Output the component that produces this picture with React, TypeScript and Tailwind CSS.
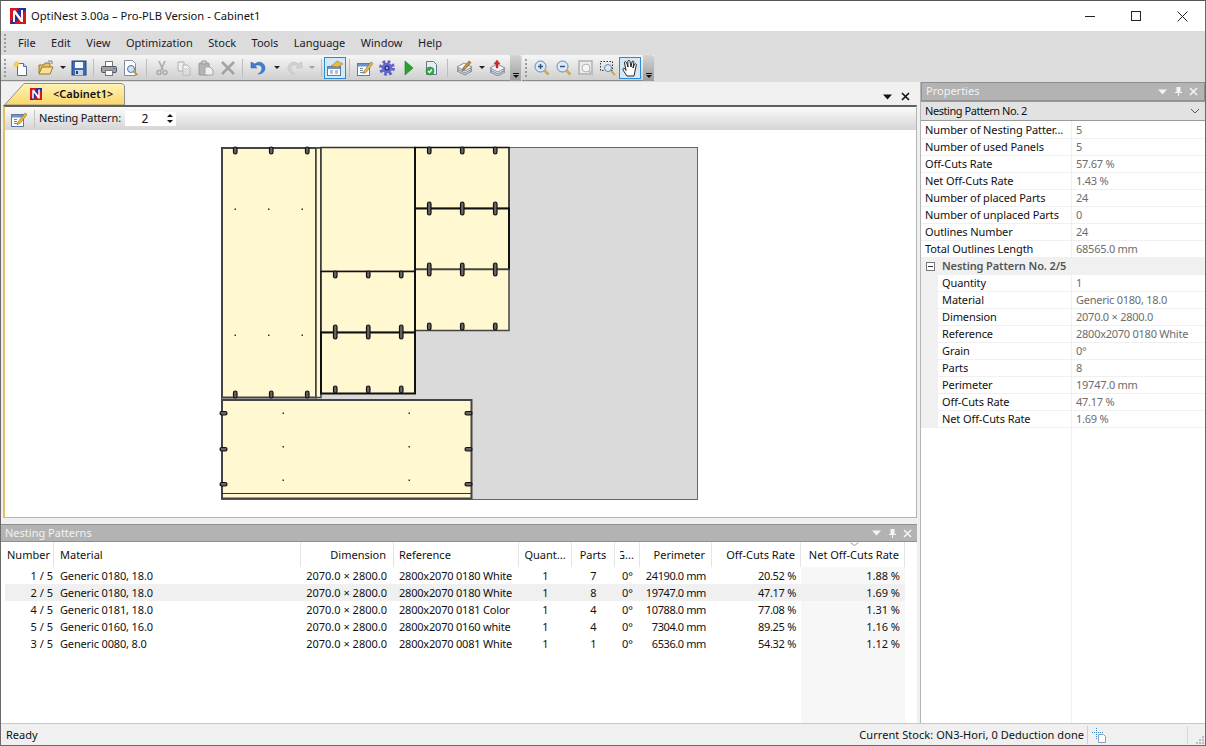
import type { ReactNode } from 'react';

// ─── Data ───

const SUMMARY = [
  ['Number of Nesting Patter...', '5'],
  ['Number of used Panels', '5'],
  ['Off-Cuts Rate', '57.67 %'],
  ['Net Off-Cuts Rate', '1.43 %'],
  ['Number of placed Parts', '24'],
  ['Number of unplaced Parts', '0'],
  ['Outlines Number', '24'],
  ['Total Outlines Length', '68565.0 mm'],
];

const DETAILS = [
  ['Quantity', '1'],
  ['Material', 'Generic 0180, 18.0'],
  ['Dimension', '2070.0 × 2800.0'],
  ['Reference', '2800x2070 0180 White'],
  ['Grain', '0°'],
  ['Parts', '8'],
  ['Perimeter', '19747.0 mm'],
  ['Off-Cuts Rate', '47.17 %'],
  ['Net Off-Cuts Rate', '1.69 %'],
];

const PATTERNS = [
  ['1 / 5', 'Generic 0180, 18.0', '2800x2070 0180 White', '7', '24190.0 mm', '20.52 %', '1.88 %'],
  ['2 / 5', 'Generic 0180, 18.0', '2800x2070 0180 White', '8', '19747.0 mm', '47.17 %', '1.69 %'],
  ['4 / 5', 'Generic 0181, 18.0', '2800x2070 0181 Color', '4', '10788.0 mm', '77.08 %', '1.31 %'],
  ['5 / 5', 'Generic 0160, 16.0', '2800x2070 0160 white', '4', '7304.0 mm', '89.25 %', '1.16 %'],
  ['3 / 5', 'Generic 0080, 8.0', '2800x2070 0081 White', '1', '6536.0 mm', '54.32 %', '1.12 %'],
];

const HEAD_GRID = 'grid grid-cols-[53px_247px_93px_125px_53px_43px_25px_72px_89px_104px]';
const ROW_GRID = 'ml-[4px] grid w-[900px] grid-cols-[49px_247px_93px_125px_53px_43px_25px_72px_89px_104px]';

// ─── Toolbar icons ───

function Svg({ children }: { children: ReactNode }) {
  return (
    <svg width="16" height="16" viewBox="0 0 16 16" className="shrink-0">
      {children}
    </svg>
  );
}

const NewIcon = () => (
  <Svg>
    <path d="M4.500 3.500h6l3 3v9h-9z" fill="#fff" stroke="#5a6f8c" />
    <path d="M10.500 3.500v3h3" fill="#dfe6ef" stroke="#5a6f8c" />
    <path d="M3 0l1 2 2-1-1 2 2 1-2 1 1 2-2-1-1 2-1-2-2 1 1-2-1-1 2-1-1-2 2 1z" fill="#f6cf4a" />
  </Svg>
);
const OpenIcon = () => (
  <Svg>
    <path d="M1 5h5l1-2h5v10H1z" fill="#e7c565" stroke="#99772b" />
    <path d="M1 14l3-7h11l-3 7z" fill="#f9e298" stroke="#99772b" />
    <path d="M10 1h4v3" fill="none" stroke="#6a7f9c" />
  </Svg>
);
const SaveIcon = () => (
  <Svg>
    <rect x="1" y="1" width="14" height="14" fill="#3f6db5" stroke="#23437c" />
    <rect x="4" y="2" width="8" height="6" fill="#f4f7fb" />
    <rect x="4" y="10" width="8" height="5" fill="#c9d4e4" />
    <rect x="5" y="11" width="2" height="3" fill="#23437c" />
  </Svg>
);
const PrintIcon = () => (
  <Svg>
    <rect x="4.500" y="1.500" width="7" height="5" fill="#fff" stroke="#777" />
    <rect x=".500" y="6.500" width="15" height="6" rx="1" fill="#9aa3ad" stroke="#555" />
    <rect x="4.500" y="10.500" width="7" height="5" fill="#fff" stroke="#777" />
    <rect x="12" y="8" width="2" height="1" fill="#3b6fc0" />
  </Svg>
);
const PreviewIcon = () => (
  <Svg>
    <path d="M1.500.500h8l3 3v12h-11z" fill="#fff" stroke="#7d8ba0" />
    <circle cx="8" cy="9" r="3.500" fill="#cfe3f5" stroke="#4f7299" />
    <path d="M10.500 11.500l4 3.500" stroke="#c9973a" strokeWidth="2" />
  </Svg>
);
const CutIcon = () => (
  <Svg>
    <path d="M5 1l4 9M11 1l-4 9" stroke="#a9a9a9" strokeWidth="1.500" fill="none" />
    <circle cx="5" cy="12.500" r="2" fill="none" stroke="#a9a9a9" strokeWidth="1.500" />
    <circle cx="11" cy="12.500" r="2" fill="none" stroke="#a9a9a9" strokeWidth="1.500" />
  </Svg>
);
const CopyIcon = () => (
  <Svg>
    <path d="M2 2h6v9H2z" fill="#eee" stroke="#b0b0b0" />
    <path d="M7 5h4l3 3v7H7z" fill="#f4f4f4" stroke="#b0b0b0" />
    <path d="M8 9h5M8 11h5M8 13h5" stroke="#c4c4c4" />
  </Svg>
);
const PasteIcon = () => (
  <Svg>
    <rect x="1" y="3" width="10" height="12" rx="1" fill="#b4b4b4" stroke="#9a9a9a" />
    <rect x="4" y="1" width="4" height="3" fill="#d5d5d5" stroke="#9a9a9a" />
    <path d="M7 7h5l3 3v5H7z" fill="#f0f0f0" stroke="#a5a5a5" />
  </Svg>
);
const DeleteIcon = () => (
  <Svg>
    <path d="M2 2l12 12M14 2L2 14" stroke="#a3a3a3" strokeWidth="2.600" />
  </Svg>
);
const UndoIcon = () => (
  <Svg>
    <path d="M1 2v6h6L5 6c3-2 6-1 7 2 0 3-2 5-4 6 5 0 7-3 7-6 0-5-6-8-10-4z" fill="#3f7fd0" stroke="#2a5ea8" strokeWidth=".5" />
  </Svg>
);
const RedoIcon = () => (
  <Svg>
    <path d="M15 2v6H9l2-2C8 4 5 5 4 8c0 3 2 5 4 6-5 0-7-3-7-6 0-5 6-8 10-4z" fill="#d2d2d2" stroke="#b8b8b8" strokeWidth=".5" />
  </Svg>
);
const PropsIcon = () => (
  <Svg>
    <rect x=".500" y="6.500" width="13" height="9" fill="#fff" stroke="#5a7ba8" />
    <rect x="1" y="7" width="12" height="2" fill="#6d93c8" />
    <path d="M3 11h3M3 13h3M8 11h3M8 13h3" stroke="#6d84a8" />
    <path d="M4 6l6-5 6 3-5 3z" fill="#e9b949" stroke="#a87c23" strokeWidth=".6" />
  </Svg>
);
const EditIcon = () => (
  <Svg>
    <rect x=".500" y="3.500" width="12" height="12" fill="#fff" stroke="#5a7ba8" />
    <rect x="1" y="4" width="11" height="2.500" fill="#6d93c8" />
    <path d="M3 8.500h3M3 10.500h3M3 12.500h3" stroke="#6d84a8" />
    <path d="M7 11l7-9 2 1.500-7 9-3 1z" fill="#e9b949" stroke="#8a6418" strokeWidth=".6" />
  </Svg>
);
const GearIcon = () => (
  <Svg>
    <circle cx="8" cy="8" r="6.200" fill="none" stroke="#5d5fc4" strokeWidth="3.400" strokeDasharray="2.600 2.250" />
    <circle cx="8" cy="8" r="5.300" fill="#6668cc" />
    <circle cx="8" cy="8" r="2.600" fill="#2f3187" />
    <circle cx="8" cy="8" r="1.200" fill="#a9abe8" />
  </Svg>
);
const PlayIcon = () => (
  <Svg>
    <path d="M4 1l8 7-8 7z" fill="#2ca02c" stroke="#1c7a1c" strokeWidth=".6" />
  </Svg>
);
const CheckDocIcon = () => (
  <Svg>
    <path d="M3.500 1.500h7l3 3v10h-10z" fill="#e6edf5" stroke="#5f7893" />
    <circle cx="7" cy="11" r="4" fill="#3aa845" stroke="#2a7f33" strokeWidth=".6" />
    <path d="M5 11l1.500 1.500L9 9.500" stroke="#fff" fill="none" strokeWidth="1.200" />
  </Svg>
);
const StackEditIcon = () => (
  <Svg>
    <path d="M0 11l7-4 8 4-7 4z" fill="#cfd6e0" stroke="#6d7a8c" strokeWidth=".8" />
    <path d="M0 9l7-4 8 4-7 4z" fill="#e2e7ee" stroke="#6d7a8c" strokeWidth=".8" />
    <path d="M0 7l7-4 8 4-7 4z" fill="#f2f4f7" stroke="#6d7a8c" strokeWidth=".8" />
    <path d="M6 8l6-7 2 1.500-6 7-3 1z" fill="#c8913b" stroke="#6e4d17" strokeWidth=".6" />
  </Svg>
);
const StackUpIcon = () => (
  <Svg>
    <path d="M0 12l7-4 8 4-7 4z" fill="#cfd6e0" stroke="#6d7a8c" strokeWidth=".8" />
    <path d="M0 10l7-4 8 4-7 4z" fill="#e2e7ee" stroke="#6d7a8c" strokeWidth=".8" />
    <path d="M0 8l7-4 8 4-7 4z" fill="#f2f4f7" stroke="#6d7a8c" strokeWidth=".8" />
    <path d="M6 8V4H4l3-4 3 4H8v4z" fill="#d62a2a" stroke="#a11616" strokeWidth=".4" />
  </Svg>
);
const ZoomInIcon = ({ minus }: { minus?: boolean }) => (
  <Svg>
    <circle cx="6.500" cy="6.500" r="5.500" fill="#dbe8f5" stroke="#6a86a6" />
    <path d="M10.500 10.500l4 4" stroke="#d2a843" strokeWidth="2.500" />
    <path d={minus ? 'M4 6.500h5' : 'M4 6.500h5M6.500 4v5'} stroke="#33568a" strokeWidth="1.500" />
  </Svg>
);
const ZoomFitIcon = () => (
  <Svg>
    <rect x="1" y="1" width="13" height="13" fill="#ececec" stroke="#b0b0b0" strokeWidth="1.500" />
    <circle cx="8" cy="8" r="4" fill="#f5f5f5" stroke="#b5b5b5" />
    <path d="M11 11l4 4" stroke="#bdbdbd" strokeWidth="2" />
  </Svg>
);
const ZoomAreaIcon = () => (
  <Svg>
    <rect x=".500" y="1.500" width="12" height="9" fill="none" stroke="#333" strokeDasharray="1.500 1.500" />
    <circle cx="8" cy="8" r="3.500" fill="#dbe8f5" stroke="#6a86a6" />
    <path d="M11 11l4 4" stroke="#d2a843" strokeWidth="2" />
  </Svg>
);
const HandIcon = () => (
  <svg width="18" height="18" viewBox="0 0 18 18" className="shrink-0">
    <path
      d="M6 17l-4-6c-.800-1.500 1-2.500 2-1l1 1.500L3.500 4c-.300-1.500 1.500-2 2-.500L7 8 6.800 2.500c0-1.500 2-1.500 2.200 0L10 8l1-5c.300-1.500 2-1.200 1.800.300L12 9l1.500-3.500c.600-1.300 2.200-.700 1.800.700L14 12l-1 5z"
      fill="#fff"
      stroke="#111"
      strokeWidth=".9"
    />
  </svg>
);

// ─── Small pieces ───

function Grip() {
  return (
    <div className="mx-[3px] flex w-[3px] shrink-0 flex-col gap-[2px]">
      {[0, 1, 2, 3, 4].map((i) => (
        <span key={i} className="h-[2px] w-[2px] bg-[#9a9a9a]" />
      ))}
    </div>
  );
}

function Sep({ cls = 'mx-[3px]' }: { cls?: string }) {
  return <span className={`${cls} h-[18px] w-px shrink-0 bg-[#bcbcbc]`} />;
}

function Tool({ children, active }: { children: ReactNode; active?: boolean }) {
  return (
    <div
      className={`flex h-[22px] w-[22px] shrink-0 items-center justify-center ${
        active ? 'border border-[#2a8ad4] bg-[#d5e8f7]' : ''
      }`}
    >
      {children}
    </div>
  );
}

function DropArrow({ light, wide }: { light?: boolean; wide?: boolean }) {
  return (
    <span className={`flex ${wide ? 'w-[15px]' : 'w-[11px]'} shrink-0 justify-center`}>
      <span
        className={`h-0 w-0 border-x-[3px] border-t-[3px] border-x-transparent ${
          light ? 'border-t-[#a0a0a0]' : 'border-t-[#222]'
        }`}
      />
    </span>
  );
}

function Overflow() {
  return (
    <div className="flex h-[26px] w-[11px] shrink-0 flex-col items-center justify-end gap-[1px] rounded-r-[3px] bg-gradient-to-b from-[#d4d4d4] to-[#9c9c9c] pb-[3px]">
      <span className="h-px w-[6px] bg-[#111]" />
      <span className="h-0 w-0 border-x-[3px] border-t-[3px] border-x-transparent border-t-[#111]" />
    </div>
  );
}

function PaneButtons({ dark }: { dark?: boolean }) {
  const c = dark ? '#111' : '#f4f4f4';
  return (
    <div className={`flex items-center ${dark ? 'gap-[8px] pr-[5px]' : 'gap-[6px] pr-[5px]'}`}>
      <svg width="11" height="8" viewBox="0 0 11 8"><path d="M1 1.500h9L5.500 6.500z" fill={c} /></svg>
      {!dark && (
        <svg width="9" height="11" viewBox="0 0 9 11"><path d="M2.500 1h4v5h1.500v1H5v3H4V7H1V6h1.500z" fill={c} /></svg>
      )}
      <svg width="9" height="9" viewBox="0 0 9 9"><path d="M1 1l7 7M8 1L1 8" stroke={c} strokeWidth="1.600" /></svg>
    </div>
  );
}

function AppLogo({ size }: { size: number }) {
  return (
    <svg width={size} height={size} viewBox="0 0 16 16" className="shrink-0">
      <rect width="16" height="16" fill="#d8141c" />
      <path d="M0 16L9 0h7v2L4 16z" fill="#1b2fa8" opacity=".95" />
      <path d="M3 14V3l2-1 6 8V2h2v12h-2L5 6v8z" fill="#fff" />
    </svg>
  );
}

// ─── Nesting drawing ───

function slotsV(xs: number[], y: number, h: number) {
  return xs.map((x) => (
    <rect key={`${x}-${y}`} x={x - 1.5} y={y} width="3.500" height={h} rx="1.700" fill="#666" stroke="#111" strokeWidth="1.200" />
  ));
}

function slotsH(x: number, ys: number[]) {
  return ys.map((y) => (
    <rect key={`${x}-${y}`} x={x} y={y - 1.500} width="7" height="3.500" rx="1.700" fill="#666" stroke="#111" strokeWidth="1.200" />
  ));
}

function dots(xs: number[], ys: number[]) {
  return xs.flatMap((x) => ys.map((y) => <rect key={`${x}:${y}`} x={x} y={y} width="1.500" height="1.500" fill="#333" />));
}

function Nesting() {
  const part = { fill: '#fff8d0', stroke: '#111', strokeWidth: 1.5 };
  const col1 = [235, 271, 307];
  const col2 = [335, 368, 401];
  const col3 = [429, 462, 495];
  return (
    <svg width="911" height="386" viewBox="0 0 911 386" className="block">
      <g transform="translate(-5 -130)">
        <rect x="221.500" y="147.500" width="476" height="352" fill="#dadada" stroke="#666" />
        <rect x="222" y="148" width="94" height="249.500" {...part} stroke="#444" strokeWidth="2" />
        <rect x="316" y="148" width="5" height="249.500" {...part} stroke="#444" />
        <rect x="321" y="147.500" width="94" height="124" {...part} stroke="#333" />
        <rect x="321" y="271.500" width="94" height="61" {...part} />
        <rect x="321" y="332.500" width="94" height="61" {...part} strokeWidth="2" />
        <rect x="415" y="147.500" width="94" height="61" {...part} />
        <rect x="415" y="208.500" width="94" height="61" {...part} strokeWidth="2" />
        <rect x="415" y="269.500" width="94" height="61" {...part} stroke="#444" />
        <path d="M415 148v245" stroke="#111" strokeWidth="2" />
        <rect x="222" y="400" width="249.500" height="98.500" {...part} stroke="#444" strokeWidth="2" />
        <path d="M221.500 493.500h250" stroke="#333" strokeWidth="1" />
        {slotsV(col1, 147, 7)}
        {slotsV(col1, 391, 7)}
        {slotsV(col2, 271, 7)}
        {slotsV(col2, 325, 14)}
        {slotsV(col2, 386, 7)}
        {slotsV(col3, 147, 7)}
        {slotsV(col3, 202, 13)}
        {slotsV(col3, 263, 13)}
        {slotsV(col3, 323, 7)}
        {slotsH(220, [413, 449, 484])}
        {slotsH(465, [413, 449, 484])}
        {dots([234.500, 268, 301.500], [208.500, 334.500])}
        {dots([282.500, 408.500], [412.500, 446, 479.500])}
      </g>
    </svg>
  );
}

// ─── Panes ───

function PropRow({ label, value, nested }: { label: string; value: string; nested?: boolean }) {
  return (
    <div className="flex h-[17px] border-b border-[#f0f0f0]">
      {nested && <div className="w-[17px] shrink-0 bg-[#f0f0f0]" />}
      <div className={`${nested ? 'w-[133px]' : 'w-[150px]'} shrink-0 truncate pl-[4px] leading-[16px] tracking-[-0.1px] text-[#111]`}>
        {label}
      </div>
      <div className="flex-1 border-l border-[#f0f0f0] pl-[4px] leading-[16px] tracking-[-0.25px] text-[#6d6d6d]">{value}</div>
    </div>
  );
}

function Properties() {
  return (
    <div className="flex w-[285px] shrink-0 flex-col border-l border-[#b5b5b5] bg-white">
      <div className="flex h-[19px] items-center justify-between border border-[#8f8f8f] bg-[#b3b3b3] pl-[4px] text-[#f2f2f2]">
        Properties
        <div className="mr-[1px]"><PaneButtons /></div>
      </div>
      <div className="flex h-[20px] items-center justify-between border-y border-[#9a9a9a] bg-[#e2e2e2] px-[4px] tracking-[-0.45px] text-[#111]">
        Nesting Pattern No. 2
        <svg width="10" height="6" viewBox="0 0 10 6" className="mr-[1px]"><path d="M1 1l4 4 4-4" stroke="#555" fill="none" /></svg>
      </div>
      <div className="relative flex-1 pt-[1px]">
        <span className="absolute bottom-0 left-[150px] top-0 w-px bg-[#f0f0f0]" />
        {SUMMARY.map(([l, v]) => <PropRow key={l} label={l} value={v} />)}
        <div className="relative flex h-[17px] items-center bg-[#f0f0f0] pl-[5px] font-semibold tracking-[-0.1px] text-[#555]">
          <span className="mr-[7px] flex h-[9px] w-[9px] items-center justify-center border border-[#777] bg-white">
            <span className="h-px w-[5px] bg-[#333]" />
          </span>
          Nesting Pattern No. 2/5
        </div>
        {DETAILS.map(([l, v]) => <PropRow key={l} label={l} value={v} nested />)}
      </div>
    </div>
  );
}

function PatternsTable() {
  const header = ['Number', 'Material', 'Dimension', 'Reference', 'Quant...', 'Parts', 'G...', 'Perimeter', 'Off-Cuts Rate', 'Net Off-Cuts Rate'];
  const align = ['text-left pl-[6px]', 'text-left pl-[6px]', 'text-right pr-[7px]', 'text-left pl-[5px]', 'text-center', 'text-center', '', 'text-right pr-[6px]', 'text-right pr-[5px]', 'text-right pr-[5px]'];
  return (
    <div className="relative flex-1 bg-white">
      <span className="absolute bottom-0 left-[800px] top-0 w-[104px] bg-[#f7f7f7]" />
      <div className={`${HEAD_GRID} relative h-[25px] w-[904px] bg-white`}>
        {header.map((h, i) => (
          <div key={h} className={`relative border-r border-[#e5e5e5] leading-[25px] ${align[i]}`}>
            {i === 9 && (
              <svg width="9" height="4" viewBox="0 0 9 4" className="absolute left-[49px] top-0"><path d="M.500.500l4 3 4-3" stroke="#999" fill="none" /></svg>
            )}
            {i === 6 ? (
              <div className="ml-[5px] overflow-hidden whitespace-nowrap">
                <span className="-ml-[3px] inline-block">{h}</span>
              </div>
            ) : (
              h
            )}
          </div>
        ))}
      </div>
      {PATTERNS.map((r, idx) => (
        <div key={r[0]} className={`${ROW_GRID} relative h-[17px] leading-[17px] text-[#111] ${idx === 1 ? 'bg-[#f0f0f0]' : ''}`}>
          <div className="pr-[1px] text-right">{r[0]}</div>
          <div className="pl-[6px] tracking-[-0.15px]">{r[1]}</div>
          <div className="pr-[7px] text-right">2070.0 × 2800.0</div>
          <div className="pl-[5px] tracking-[-0.2px]">{r[2]}</div>
          <div className="text-center">1</div>
          <div className="text-center">{r[3]}</div>
          <div className="text-center">0°</div>
          <div className="pr-[6px] text-right tracking-[-0.4px]">{r[4]}</div>
          <div className="pr-[5px] text-right tracking-[-0.3px]">{r[5]}</div>
          <div className="pr-[5px] text-right">{r[6]}</div>
        </div>
      ))}
    </div>
  );
}

function Toolbars() {
  return (
    <div className="flex h-[27px] shrink-0 bg-[#dcdcdc]">
      <div className="flex h-[26px] w-[520px] items-center border-b border-[#8a8a8a] bg-gradient-to-b from-[#f6f6f6] to-[#cfcfcf]">
        <Grip />
        <Tool><NewIcon /></Tool>
        <span className="w-[3px]" />
        <Tool><OpenIcon /></Tool>
        <DropArrow />
        <Tool><SaveIcon /></Tool>
        <Sep cls="ml-[3px] mr-[4px]" />
        <Tool><PrintIcon /></Tool>
        <Tool><PreviewIcon /></Tool>
        <Sep cls="mx-[4px]" />
        <Tool><CutIcon /></Tool>
        <Tool><CopyIcon /></Tool>
        <Tool><PasteIcon /></Tool>
        <Tool><DeleteIcon /></Tool>
        <Sep cls="ml-[3px] mr-[4px]" />
        <Tool><UndoIcon /></Tool>
        <DropArrow wide />
        <Tool><RedoIcon /></Tool>
        <DropArrow light />
        <Sep cls="ml-[4px] mr-[2px]" />
        <Tool active><PropsIcon /></Tool>
        <Sep cls="ml-[3px] mr-[4px]" />
        <Tool><EditIcon /></Tool>
        <Tool><GearIcon /></Tool>
        <Tool><PlayIcon /></Tool>
        <Tool><CheckDocIcon /></Tool>
        <Sep cls="ml-[5px] mr-[6px]" />
        <Tool><StackEditIcon /></Tool>
        <DropArrow />
        <Tool><StackUpIcon /></Tool>
        <span className="flex-1" />
        <Overflow />
      </div>
      <div className="ml-px flex h-[26px] w-[132px] items-center border-b border-[#8a8a8a] bg-gradient-to-b from-[#f6f6f6] to-[#cfcfcf]">
        <Grip />
        <Tool><ZoomInIcon /></Tool>
        <Tool><ZoomInIcon minus /></Tool>
        <Tool><ZoomFitIcon /></Tool>
        <Tool><ZoomAreaIcon /></Tool>
        <Tool active><HandIcon /></Tool>
        <span className="flex-1" />
        <Overflow />
      </div>
    </div>
  );
}

export default function App() {
  return (
    <div className="flex h-[746px] w-[1206px] flex-col overflow-hidden border border-t-[#555] border-x-[#6a6a6a] border-b-[#6a6a6a] bg-[#f0f0f0] font-['Noto_Sans',sans-serif] text-[11px] text-[#111]">
      {/* Title bar */}
      <div className="flex h-[30px] shrink-0 items-center bg-white pl-[9px]">
        <AppLogo size={16} />
        <span className="ml-[5px] text-[11.2px] text-[#111]">OptiNest 3.00a – Pro-PLB Version - Cabinet1</span>
        <div className="ml-auto flex h-full">
          <div className="flex w-[46px] items-center justify-center"><span className="h-px w-[10px] bg-[#222]" /></div>
          <div className="flex w-[46px] items-center justify-center"><span className="h-[10px] w-[10px] border border-[#222]" /></div>
          <div className="flex w-[46px] items-center justify-center">
            <svg width="11" height="11" viewBox="0 0 11 11"><path d="M.500.500l10 10M10.500.500l-10 10" stroke="#222" /></svg>
          </div>
        </div>
      </div>

      {/* Menu */}
      <div className="flex h-[24px] shrink-0 items-center gap-[15.5px] bg-[#dcdcdc] text-[#1a1a2e]">
        <span className="flex items-center gap-[7px]">
          <Grip />
          <span className="ml-[1px]">File</span>
        </span>
        {['Edit', 'View', 'Optimization', 'Stock', 'Tools', 'Language', 'Window', 'Help'].map((m) => (
          <span key={m}>{m}</span>
        ))}
      </div>

      <Toolbars />

      {/* Body */}
      <div className="flex min-h-0 flex-1">
        <div className="flex min-w-0 flex-1 flex-col">
          {/* Document */}
          <div className="flex h-[23px] shrink-0 items-end justify-between pl-[3px] pr-[5px]">
            <div className="relative flex h-[22px] w-[121px] items-center pl-[26px]">
              <svg width="121" height="22" viewBox="0 0 121 22" className="absolute inset-0">
                <defs>
                  <linearGradient id="tabFill" x1="0" y1="0" x2="0" y2="1">
                    <stop offset="0" stopColor="#fff3b8" />
                    <stop offset="1" stopColor="#fbd668" />
                  </linearGradient>
                </defs>
                <path d="M.500 22L20 .500h98l2.500 2V22z" fill="url(#tabFill)" stroke="#8f8f8f" />
              </svg>
              <span className="relative"><AppLogo size={12} /></span>
              <span className="relative ml-[11px] font-semibold text-[#111]">&lt;Cabinet1&gt;</span>
            </div>
            <div className="pb-[4px]"><PaneButtons dark /></div>
          </div>
          <div className="ml-[2px] mr-[3px] flex h-[413px] shrink-0 flex-col border-2 border-[#5f5f5f] border-b border-r border-b-[#b5b5b5] border-l-[#e3c264] border-r-[#b5b5b5] bg-white">
            <div className="flex h-[23px] shrink-0 items-center bg-gradient-to-b from-[#fbfbfb] to-[#d5d5d5]">
              <div className="ml-[3px]"><Tool><EditIcon /></Tool></div>
              <span className="ml-[4px] mr-[4px] h-[18px] w-px bg-[#c4c4c4]" />
              <span className="tracking-[-0.15px]">Nesting Pattern:</span>
              <div className="ml-[4px] flex h-[15px] w-[40px] items-center justify-center bg-white text-[12px]">2</div>
              <div className="flex h-[14px] w-[11px] flex-col items-center justify-center gap-[3px] bg-white">
                <span className="h-0 w-0 border-x-[3px] border-b-[3px] border-x-transparent border-b-[#111]" />
                <span className="h-0 w-0 border-x-[3px] border-t-[3px] border-x-transparent border-t-[#111]" />
              </div>
            </div>
            <div className="flex-1 overflow-hidden"><Nesting /></div>
          </div>

          {/* Nesting patterns */}
          <div className="mr-[3px] mt-[6px] flex min-h-0 flex-1 flex-col">
            <div className="flex h-[18px] shrink-0 items-center justify-between border-y border-[#8f8f8f] bg-[#b3b3b3] pl-[4px] text-[#f2f2f2]">
              Nesting Patterns
              <PaneButtons />
            </div>
            <PatternsTable />
          </div>
        </div>
        <Properties />
      </div>

      {/* Status bar */}
      <div className="flex h-[22px] shrink-0 items-center border-t border-[#c8c8c8] bg-[#f0f0f0] pl-[5px] pt-[1px]">
        <span className="flex-1">Ready</span>
        <span className="tracking-[0.05px]">Current Stock: ON3-Hori, 0 Deduction done</span>
        <span className="ml-[3px] h-[18px] w-px bg-[#d0d0d0]" />
        <svg width="15" height="15" viewBox="0 0 15 15" className="ml-[4px] mr-[80px]">
          <path d="M4.500 0v11M0 4.500h11" stroke="#3b86c9" strokeDasharray="1 1" />
          <path d="M6.500 6.500h5l2 2v6h-7z" fill="#fff" stroke="#8aa0b5" />
        </svg>
        <span className="h-[18px] w-px bg-[#d8d8d8]" />
        <svg width="10" height="10" viewBox="0 0 10 10" className="ml-[6px] mr-[1px] self-end">
          <path d="M8 1h2v2H8zM5 4h2v2H5zM8 4h2v2H8zM2 7h2v2H2zM5 7h2v2H5zM8 7h2v2H8z" fill="#bdbdbd" />
        </svg>
      </div>
    </div>
  );
}
